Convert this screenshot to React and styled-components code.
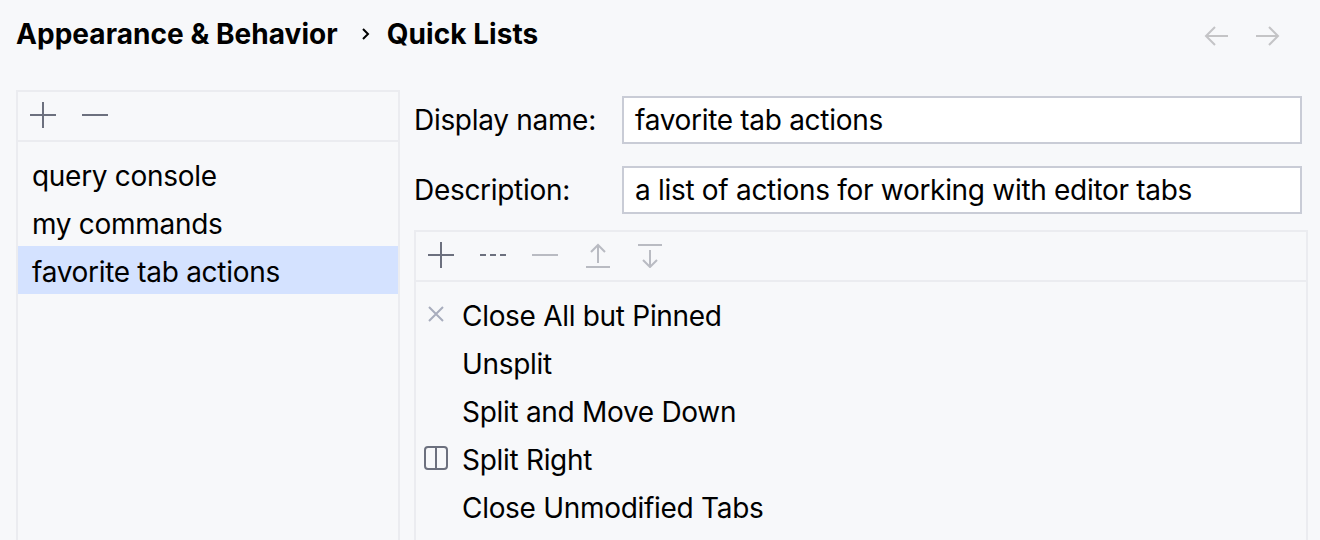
import React from 'react';
import styled, { createGlobalStyle } from 'styled-components';

const GlobalStyle = createGlobalStyle`
  html, body {
    margin: 0;
    height: 100%;
    overflow: hidden;
    background: #f7f8fa;
  }
  body {
    font-family: Inter, "Liberation Sans", sans-serif;
    color: #000;
  }
`;

const Page = styled.div`
  width: 1320px;
  height: 540px;
  overflow: hidden;
  box-sizing: border-box;
  padding: 0 12px 0 16px;
  display: flex;
  flex-direction: column;
`;

const Header = styled.header`
  height: 90px;
  flex: none;
  box-sizing: border-box;
  padding-top: 16px;
  display: flex;
  align-items: flex-start;
  justify-content: space-between;
`;

const Crumbs = styled.div`
  display: flex;
  align-items: center;
  height: 36px;
  font-size: 28px;
  font-weight: 700;
  letter-spacing: 0.05px;
`;

const Chevron = styled.svg`
  width: 12px;
  height: 14px;
  margin: 0 16px 0 21px;
`;

const NavArrows = styled.div`
  display: flex;
  gap: 28px;
  padding: 8px 28px 0 0;
`;

const Main = styled.div`
  flex: 1;
  min-height: 0;
  display: flex;
  gap: 14px;
`;

const Panel = styled.section`
  box-sizing: border-box;
  border: 2px solid #ebecf0;
  border-bottom: none;
  display: flex;
  flex-direction: column;
`;

const ListPanel = styled(Panel)`
  width: 384px;
  flex: none;
`;

const Toolbar = styled.div`
  height: 50px;
  flex: none;
  box-sizing: border-box;
  border-bottom: 2px solid #ebecf0;
  padding: 0 0 2px 12px;
  display: flex;
  align-items: center;
  gap: 26px;
`;

const List = styled.ul`
  list-style: none;
  margin: 0;
  padding: 8px 0 0;
`;

const Item = styled.li`
  height: 48px;
  box-sizing: border-box;
  padding: 3px 0 0 ${(p) => p.$indent ?? 14}px;
  display: flex;
  align-items: center;
  font-size: 28px;
  letter-spacing: -0.3px;
  background: ${(p) => (p.$selected ? '#d4e2ff' : 'transparent')};
`;

const Editor = styled.div`
  flex: 1;
  min-width: 0;
  display: flex;
  flex-direction: column;
`;

const Field = styled.label`
  display: flex;
  align-items: center;
  height: 48px;
  margin-top: ${(p) => p.$top}px;
  font-size: 28px;
  letter-spacing: -0.3px;
`;

const FieldName = styled.span`
  width: 208px;
  flex: none;
`;

const FieldValue = styled.div`
  width: 680px;
  height: 48px;
  box-sizing: border-box;
  border: 2px solid #c9ccd6;
  background: #fff;
  padding: 0 0 0 11px;
  display: flex;
  align-items: center;
`;

const ActionsPanel = styled(Panel)`
  margin-top: 16px;
  flex: 1;
  min-height: 0;
`;

const ActionIcon = styled.span`
  width: 36px;
  height: 24px;
  margin: 0 8px 0 2px;
  display: flex;
  align-items: center;
  justify-content: center;
  flex: none;
`;

const Stroke = styled.svg`
  width: ${(p) => p.$size || 26}px;
  height: ${(p) => p.$size || 26}px;
  flex: none;
  fill: none;
  stroke: ${(p) => p.$color || '#6c707e'};
  stroke-width: 2;
`;

const RowGlyph = styled(Stroke)`
  margin-top: -3px;
`;

const PlusIcon = () => (
  <Stroke viewBox="0 0 26 26"><path d="M0 13H26M13 0V26" /></Stroke>
);
const MinusIcon = ({ color }) => (
  <Stroke viewBox="0 0 26 26" $color={color}><path d="M0 13H26" /></Stroke>
);
const SeparatorIcon = () => (
  <Stroke viewBox="0 0 26 26"><path d="M0 13H6M10 13H16M20 13H26" /></Stroke>
);
const UpIcon = () => (
  <Stroke viewBox="0 0 26 26" $color="#b9bbc2"><path d="M2 25H26M14 21V3M7 10L14 3L21 10" /></Stroke>
);
const DownIcon = () => (
  <Stroke viewBox="0 0 26 26" $color="#b9bbc2"><path d="M2 3H26M14 8V25M7 18L14 25L21 18" /></Stroke>
);

const actions = [
  { name: 'Close All but Pinned', icon: 'close' },
  { name: 'Unsplit' },
  { name: 'Split and Move Down' },
  { name: 'Split Right', icon: 'split' },
  { name: 'Close Unmodified Tabs' },
];

const App = () => (
  <Page>
    <GlobalStyle />
    <Header>
      <Crumbs>
        Appearance &amp; Behavior
        <Chevron viewBox="0 0 12 14" fill="none" stroke="#000" strokeWidth="2">
          <path d="M4 2L9 7L4 12" />
        </Chevron>
        Quick Lists
      </Crumbs>
      <NavArrows>
        <Stroke viewBox="0 0 24 24" $size={24} $color="#c4c4c6">
          <path d="M24 12H2M11 3L2 12L11 21" />
        </Stroke>
        <Stroke viewBox="0 0 24 24" $size={24} $color="#c4c4c6">
          <path d="M0 12H22M13 3L22 12L13 21" />
        </Stroke>
      </NavArrows>
    </Header>
    <Main>
      <ListPanel>
        <Toolbar>
          <PlusIcon />
          <MinusIcon />
        </Toolbar>
        <List>
          <Item>query console</Item>
          <Item>my commands</Item>
          <Item $selected>favorite tab actions</Item>
        </List>
      </ListPanel>
      <Editor>
        <Field $top={6}>
          <FieldName>Display name:</FieldName>
          <FieldValue>favorite tab actions</FieldValue>
        </Field>
        <Field $top={22}>
          <FieldName>Description:</FieldName>
          <FieldValue>a list of actions for working with editor tabs</FieldValue>
        </Field>
        <ActionsPanel>
          <Toolbar>
            <PlusIcon />
            <SeparatorIcon />
            <MinusIcon color="#b9bbc2" />
            <UpIcon />
            <DownIcon />
          </Toolbar>
          <List>
            {actions.map((action) => (
              <Item key={action.name} $indent={0}>
                <ActionIcon>
                  {action.icon === 'close' && (
                    <RowGlyph viewBox="0 0 16 16" $size={16} $color="#a8adbd">
                      <path d="M1 1L15 15M15 1L1 15" />
                    </RowGlyph>
                  )}
                  {action.icon === 'split' && (
                    <RowGlyph viewBox="0 0 24 24" $size={24}>
                      <rect x="1" y="1" width="22" height="22" rx="3" />
                      <path d="M12 1V23" />
                    </RowGlyph>
                  )}
                </ActionIcon>
                {action.name}
              </Item>
            ))}
          </List>
        </ActionsPanel>
      </Editor>
    </Main>
  </Page>
);

export default App;
